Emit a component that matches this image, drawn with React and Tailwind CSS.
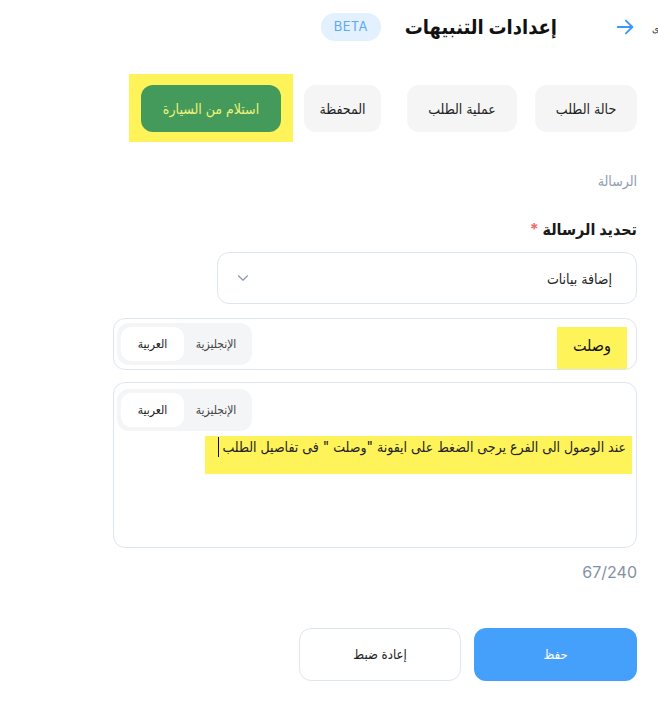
import { ChevronDown } from 'lucide-react';

const font = { fontFamily: 'Inter, "DejaVu Sans Condensed", "DejaVu Sans", sans-serif' };

function LangToggle() {
  return (
    <div className="flex items-center bg-[#f4f5f6] rounded-xl p-[4px] h-[42px] w-[135px]">
      <div className="flex-1 flex items-center justify-center text-[12px] text-[#444]">الإنجليزية</div>
      <div className="h-full w-[63px] bg-white rounded-[10px] flex items-center justify-center text-[12px] text-[#222]">
        العربية
      </div>
    </div>
  );
}

export default function App() {
  return (
    <div dir="rtl" className="w-[658px] h-[715px] bg-white text-[#1f1f1f] overflow-hidden" style={font}>
      <div className="flex items-center h-[54px]">
        <span className="text-[10px] text-[#333] w-[8px] mr-[-1px] mt-[3px]">ى</span>
        <svg className="mr-[15px]" width="22" height="22" viewBox="0 0 24 24" fill="none" stroke="#3f98f7" strokeWidth="2" strokeLinecap="round" strokeLinejoin="round">
          <path d="M4 12h16" />
          <path d="M13 5l7 7-7 7" />
        </svg>
        <h1 className="mr-[57px] text-[20px] font-bold text-[#111] leading-none">إعدادات التنبيهات</h1>
        <span className="mr-[24px] h-[28px] w-[60px] rounded-full bg-[#e3f0fd] text-[#5ea7f4] text-[13px] flex items-center justify-center tracking-wide">BETA</span>
      </div>

      <div className="pr-[21px] w-[658px]">
        <div className="flex items-center mt-[20px] h-[68px]">
          <button className="w-[102px] h-[47px] rounded-xl bg-[#f5f5f5] text-[14px] text-[#222]">حالة الطلب</button>
          <button className="mr-[18px] w-[110px] h-[47px] rounded-xl bg-[#f5f5f5] text-[14px] text-[#222]">عملية الطلب</button>
          <button className="mr-[26px] w-[77px] h-[47px] rounded-xl bg-[#f5f5f5] text-[14px] text-[#222]">المحفظة</button>
          <div className="mr-[11px] bg-[#fff35a] h-[68px] w-[164px] flex items-center justify-center">
            <button className="w-[140px] h-[47px] rounded-xl bg-[#449a5b] text-[14px] text-[#f0f27a]">استلام من السيارة</button>
          </div>
        </div>

        <div className="mt-[28px] text-[14px] text-[#8e9bb0]">الرسالة</div>
        <div className="mt-[26px] text-[16px] font-bold text-[#1a1a1a]">
          تحديد الرسالة <span className="text-[#f06b6b]">*</span>
        </div>

        <div className="mt-[11px] w-[420px] h-[52px] border border-[#dde5ef] rounded-xl flex items-center justify-between pr-[24px] pl-[16px]">
          <span className="text-[14px] text-[#222]">إضافة بيانات</span>
          <ChevronDown size={18} color="#8a97aa" strokeWidth={1.5} />
        </div>

        <div className="mt-[14px] w-[524px] h-[52px] border border-[#dde5ef] rounded-xl flex items-center justify-between pr-[9px] pl-[3px] overflow-hidden">
          <div className="bg-[#fff35a] h-[43px] mt-[9px] w-[70px] flex items-center justify-center pb-[8px] text-[16px] text-[#111]">وصلت</div>
          <LangToggle />
        </div>

        <div className="mt-[12px] w-[524px] h-[166px] border border-[#dde5ef] rounded-xl flex flex-col pr-[4px] pl-[3px]">
          <div className="flex justify-end mt-[6px]">
            <LangToggle />
          </div>
          <div className="mt-[5px] bg-[#fff35a] w-[427px] h-[38px] flex items-start pr-[6px] pt-[1px]">
            <span className="text-[14px] text-[#222] leading-[20px] whitespace-nowrap">عند الوصول الى الفرع يرجى الضغط على ايقونة "وصلت " فى تفاصيل الطلب</span>
            <span className="w-[1px] h-[20px] bg-[#111] mr-[3px] shrink-0"></span>
          </div>
        </div>

        <div className="mt-[12px] w-[524px] text-[16px] text-[#8391a5]">
          <span dir="ltr">67/240</span>
        </div>

        <div className="mt-[44px] flex items-center">
          <button className="w-[163px] h-[53px] rounded-xl bg-[#45a0fc] text-white text-[13px]">حفظ</button>
          <button className="mr-[13px] w-[162px] h-[53px] rounded-xl bg-white border border-[#dde5ef] text-[#222] text-[13px]">إعادة ضبط</button>
        </div>
      </div>
    </div>
  );
}
